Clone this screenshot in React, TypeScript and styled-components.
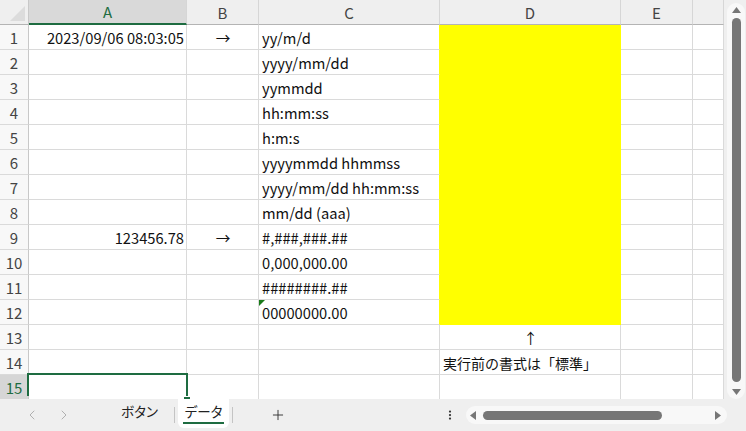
import React from 'react';
import styled, { createGlobalStyle, css } from 'styled-components';
import { ChevronLeft, ChevronRight, Plus, EllipsisVertical } from 'lucide-react';

const GREEN = '#1e6c41';
const GRID = '#dadada';
const YELLOW = '#ffff00';
const FONT = `"Noto Sans CJK JP", "Noto Sans", sans-serif`;

const GlobalStyle = createGlobalStyle`
  html, body { margin: 0; padding: 0; background: #efefef; }
  body { font-family: ${FONT}; overflow: hidden; }
  * { box-sizing: border-box; }
`;

const Window = styled.div`
  width: 746px;
  height: 431px;
  display: flex;
  flex-direction: column;
  background: #efefef;
  overflow: hidden;
`;

const SheetArea = styled.div`
  display: flex;
  height: 399px;
  flex: none;
`;

const Grid = styled.div`
  position: relative;
  flex: 1;
  display: grid;
  grid-template-columns: 29px 158px 72px 181px 181px 72px 1fr;
  grid-auto-rows: 25px;
  align-content: start;
  overflow: hidden;
  background: #fff;
`;

const Corner = styled.div`
  position: relative;
  background: #efefef;
  border-right: 1px solid #c8c8c8;
  border-bottom: 1px solid #b4b4b4;
  &::after {
    content: '';
    position: absolute;
    right: 3px;
    bottom: 3px;
    width: 15px;
    height: 15px;
    background: #dcdcdc;
    clip-path: polygon(100% 0, 100% 100%, 0 100%);
  }
`;

const ColHeader = styled.div<{ $active?: boolean }>`
  background: #efefef;
  border-right: 1px solid #d6d6d6;
  border-bottom: 1px solid #b4b4b4;
  color: #444;
  font-size: 15px;
  display: flex;
  align-items: center;
  justify-content: center;
  ${(p) =>
    p.$active &&
    css`
      background: #d9d9d9;
      color: ${GREEN};
      border-bottom: 2px solid ${GREEN};
    `}
`;

const RowHeader = styled.div<{ $active?: boolean }>`
  background: #f8f8f8;
  border-right: 1px solid #c8c8c8;
  border-bottom: 1px solid ${GRID};
  color: #444;
  font-size: 15px;
  display: flex;
  align-items: center;
  justify-content: center;
  padding-top: 1px;
  ${(p) =>
    p.$active &&
    css`
      background: #d6d6d6;
      color: ${GREEN};
    `}
`;

const Cell = styled.div<{
  $align?: 'left' | 'right' | 'center';
  $fill?: boolean;
  $fillRight?: boolean;
  $note?: boolean;
  $cjk?: boolean;
}>`
  position: relative;
  border-right: 1px solid ${(p) => (p.$fill || p.$fillRight ? YELLOW : GRID)};
  border-bottom: 1px solid ${(p) => (p.$fill ? YELLOW : GRID)};
  background: ${(p) => (p.$fill ? YELLOW : '#fff')};
  color: #111;
  font-size: ${(p) => (p.$cjk ? '14px' : '14.7px')};
  line-height: 24px;
  padding: 1px 2px 0 3px;
  white-space: nowrap;
  overflow: hidden;
  text-align: ${(p) => p.$align || 'left'};
  ${(p) =>
    p.$note &&
    css`
      &::before {
        content: '';
        position: absolute;
        left: 0;
        top: 0;
        width: 6px;
        height: 6px;
        background: #1a7a1a;
        clip-path: polygon(0 0, 100% 0, 0 100%);
      }
    `}
`;

const Selection = styled.div`
  position: absolute;
  left: 27px;
  top: 373px;
  width: 161px;
  height: 23px;
  border: 2px solid ${GREEN};
  border-bottom: none;
  pointer-events: none;
`;

const FillHandle = styled.div`
  position: absolute;
  left: 184px;
  top: 397px;
  width: 6px;
  height: 6px;
  background: ${GREEN};
  box-shadow: 0 0 0 1px #fff;
`;

const VScroll = styled.div`
  width: 22px;
  flex: none;
  background: #efefef;
  padding: 3px 1px 0 3px;
  display: flex;
`;

const VTrack = styled.div`
  flex: 1;
  background: #f8f8f8;
  border-radius: 9px;
  display: flex;
  flex-direction: column;
  align-items: center;
  padding: 4px 0 4px;
`;

const VThumb = styled.div`
  flex: 1;
  width: 9px;
  margin: 5px 0 7px;
  border-radius: 5px;
  background: #767676;
`;

const Arrow = styled.svg`
  flex: none;
  display: block;
`;

const TabBar = styled.div`
  flex: 1;
  display: flex;
  align-items: center;
  background: #efefef;
`;

const NavButton = styled.div`
  width: 32px;
  display: flex;
  justify-content: center;
  align-items: center;
  color: #ababab;
`;

const NavGroup = styled.div`
  display: flex;
  padding-left: 16px;
  width: 108px;
`;

const Tab = styled.div<{ $active?: boolean }>`
  align-self: flex-start;
  margin-top: -1px;
  height: 30px;
  width: ${(p) => (p.$active ? '51px' : '63px')};
  display: flex;
  align-items: center;
  justify-content: center;
  font-size: 13.5px;
  color: #222;
  font-feature-settings: 'palt';
  border-radius: 0 0 6px 6px;
  background: ${(p) => (p.$active ? '#fff' : 'transparent')};
`;

const TabLabel = styled.span<{ $active?: boolean }>`
  line-height: 18px;
  padding: 0 2px 2px;
  border-bottom: 2px solid ${(p) => (p.$active ? GREEN : 'transparent')};
`;

const TabSep = styled.div`
  width: 1px;
  height: 16px;
  background: #c4c4c4;
  margin: 0 3px;
  align-self: center;
`;

const AddButton = styled.div`
  width: 28px;
  margin-left: 28px;
  display: flex;
  justify-content: center;
  color: #333;
`;

const Spacer = styled.div`
  flex: 1;
`;

const MoreButton = styled.div`
  width: 12px;
  display: flex;
  justify-content: center;
  color: #333;
  margin-right: 10px;
`;

const HTrack = styled.div`
  width: 261px;
  height: 18px;
  margin-right: 19px;
  background: #f8f8f8;
  border-radius: 9px;
  display: flex;
  align-items: center;
  padding: 0 6px 0 4px;
`;

const HThumb = styled.div`
  width: 179px;
  height: 9px;
  margin-left: 7px;
  border-radius: 5px;
  background: #767676;
`;

type Row = {
  a?: string;
  b?: string;
  c?: string;
  d?: string;
  dAlign?: 'left' | 'center';
  dCjk?: boolean;
  note?: boolean;
  fill?: boolean;
};

const rows: Row[] = [
  { a: '2023/09/06 08:03:05', b: '→', c: 'yy/m/d', fill: true },
  { c: 'yyyy/mm/dd', fill: true },
  { c: 'yymmdd', fill: true },
  { c: 'hh:mm:ss', fill: true },
  { c: 'h:m:s', fill: true },
  { c: 'yyyymmdd hhmmss', fill: true },
  { c: 'yyyy/mm/dd hh:mm:ss', fill: true },
  { c: 'mm/dd (aaa)', fill: true },
  { a: '123456.78', b: '→', c: '#,###,###.##', fill: true },
  { c: '0,000,000.00', fill: true },
  { c: '########.##', fill: true },
  { c: '00000000.00', note: true, fill: true },
  { d: '↑', dAlign: 'center' },
  { d: '実行前の書式は「標準」', dCjk: true },
  {},
];

const columns = ['A', 'B', 'C', 'D', 'E', ''];

export default function App() {
  return (
    <>
      <GlobalStyle />
      <Window>
        <SheetArea>
          <Grid>
            <Corner />
            {columns.map((c, i) => (
              <ColHeader key={i} $active={c === 'A'}>
                {c}
              </ColHeader>
            ))}
            {rows.map((r, i) => (
              <React.Fragment key={i}>
                <RowHeader $active={i === 14}>{i + 1}</RowHeader>
                <Cell $align="right">{r.a}</Cell>
                <Cell $align="center">{r.b}</Cell>
                <Cell $fillRight={r.fill} $note={r.note}>
                  {r.c}
                </Cell>
                <Cell $fill={r.fill} $align={r.dAlign} $cjk={r.dCjk}>
                  {r.d}
                </Cell>
                <Cell />
                <Cell />
              </React.Fragment>
            ))}
            <Selection />
            <FillHandle />
          </Grid>
          <VScroll>
            <VTrack>
              <Arrow width="9" height="6" viewBox="0 0 9 6">
                <path d="M4.5 0 L9 6 L0 6 Z" fill="#767676" />
              </Arrow>
              <VThumb />
              <Arrow width="9" height="6" viewBox="0 0 9 6">
                <path d="M0 0 L9 0 L4.5 6 Z" fill="#767676" />
              </Arrow>
            </VTrack>
          </VScroll>
        </SheetArea>
        <TabBar>
          <NavGroup>
            <NavButton>
              <ChevronLeft size={16} strokeWidth={1.4} />
            </NavButton>
            <NavButton>
              <ChevronRight size={16} strokeWidth={1.4} />
            </NavButton>
          </NavGroup>
          <Tab>
            <TabLabel>ボタン</TabLabel>
          </Tab>
          <TabSep />
          <Tab $active>
            <TabLabel $active>データ</TabLabel>
          </Tab>
          <TabSep />
          <AddButton>
            <Plus size={16} strokeWidth={1.4} />
          </AddButton>
          <Spacer />
          <MoreButton>
            <EllipsisVertical size={14} strokeWidth={2.5} />
          </MoreButton>
          <HTrack>
            <Arrow width="6" height="9" viewBox="0 0 6 9">
              <path d="M0 4.5 L6 0 L6 9 Z" fill="#767676" />
            </Arrow>
            <HThumb />
            <Spacer />
            <Arrow width="6" height="9" viewBox="0 0 6 9">
              <path d="M6 4.5 L0 0 L0 9 Z" fill="#767676" />
            </Arrow>
          </HTrack>
        </TabBar>
      </Window>
    </>
  );
}
